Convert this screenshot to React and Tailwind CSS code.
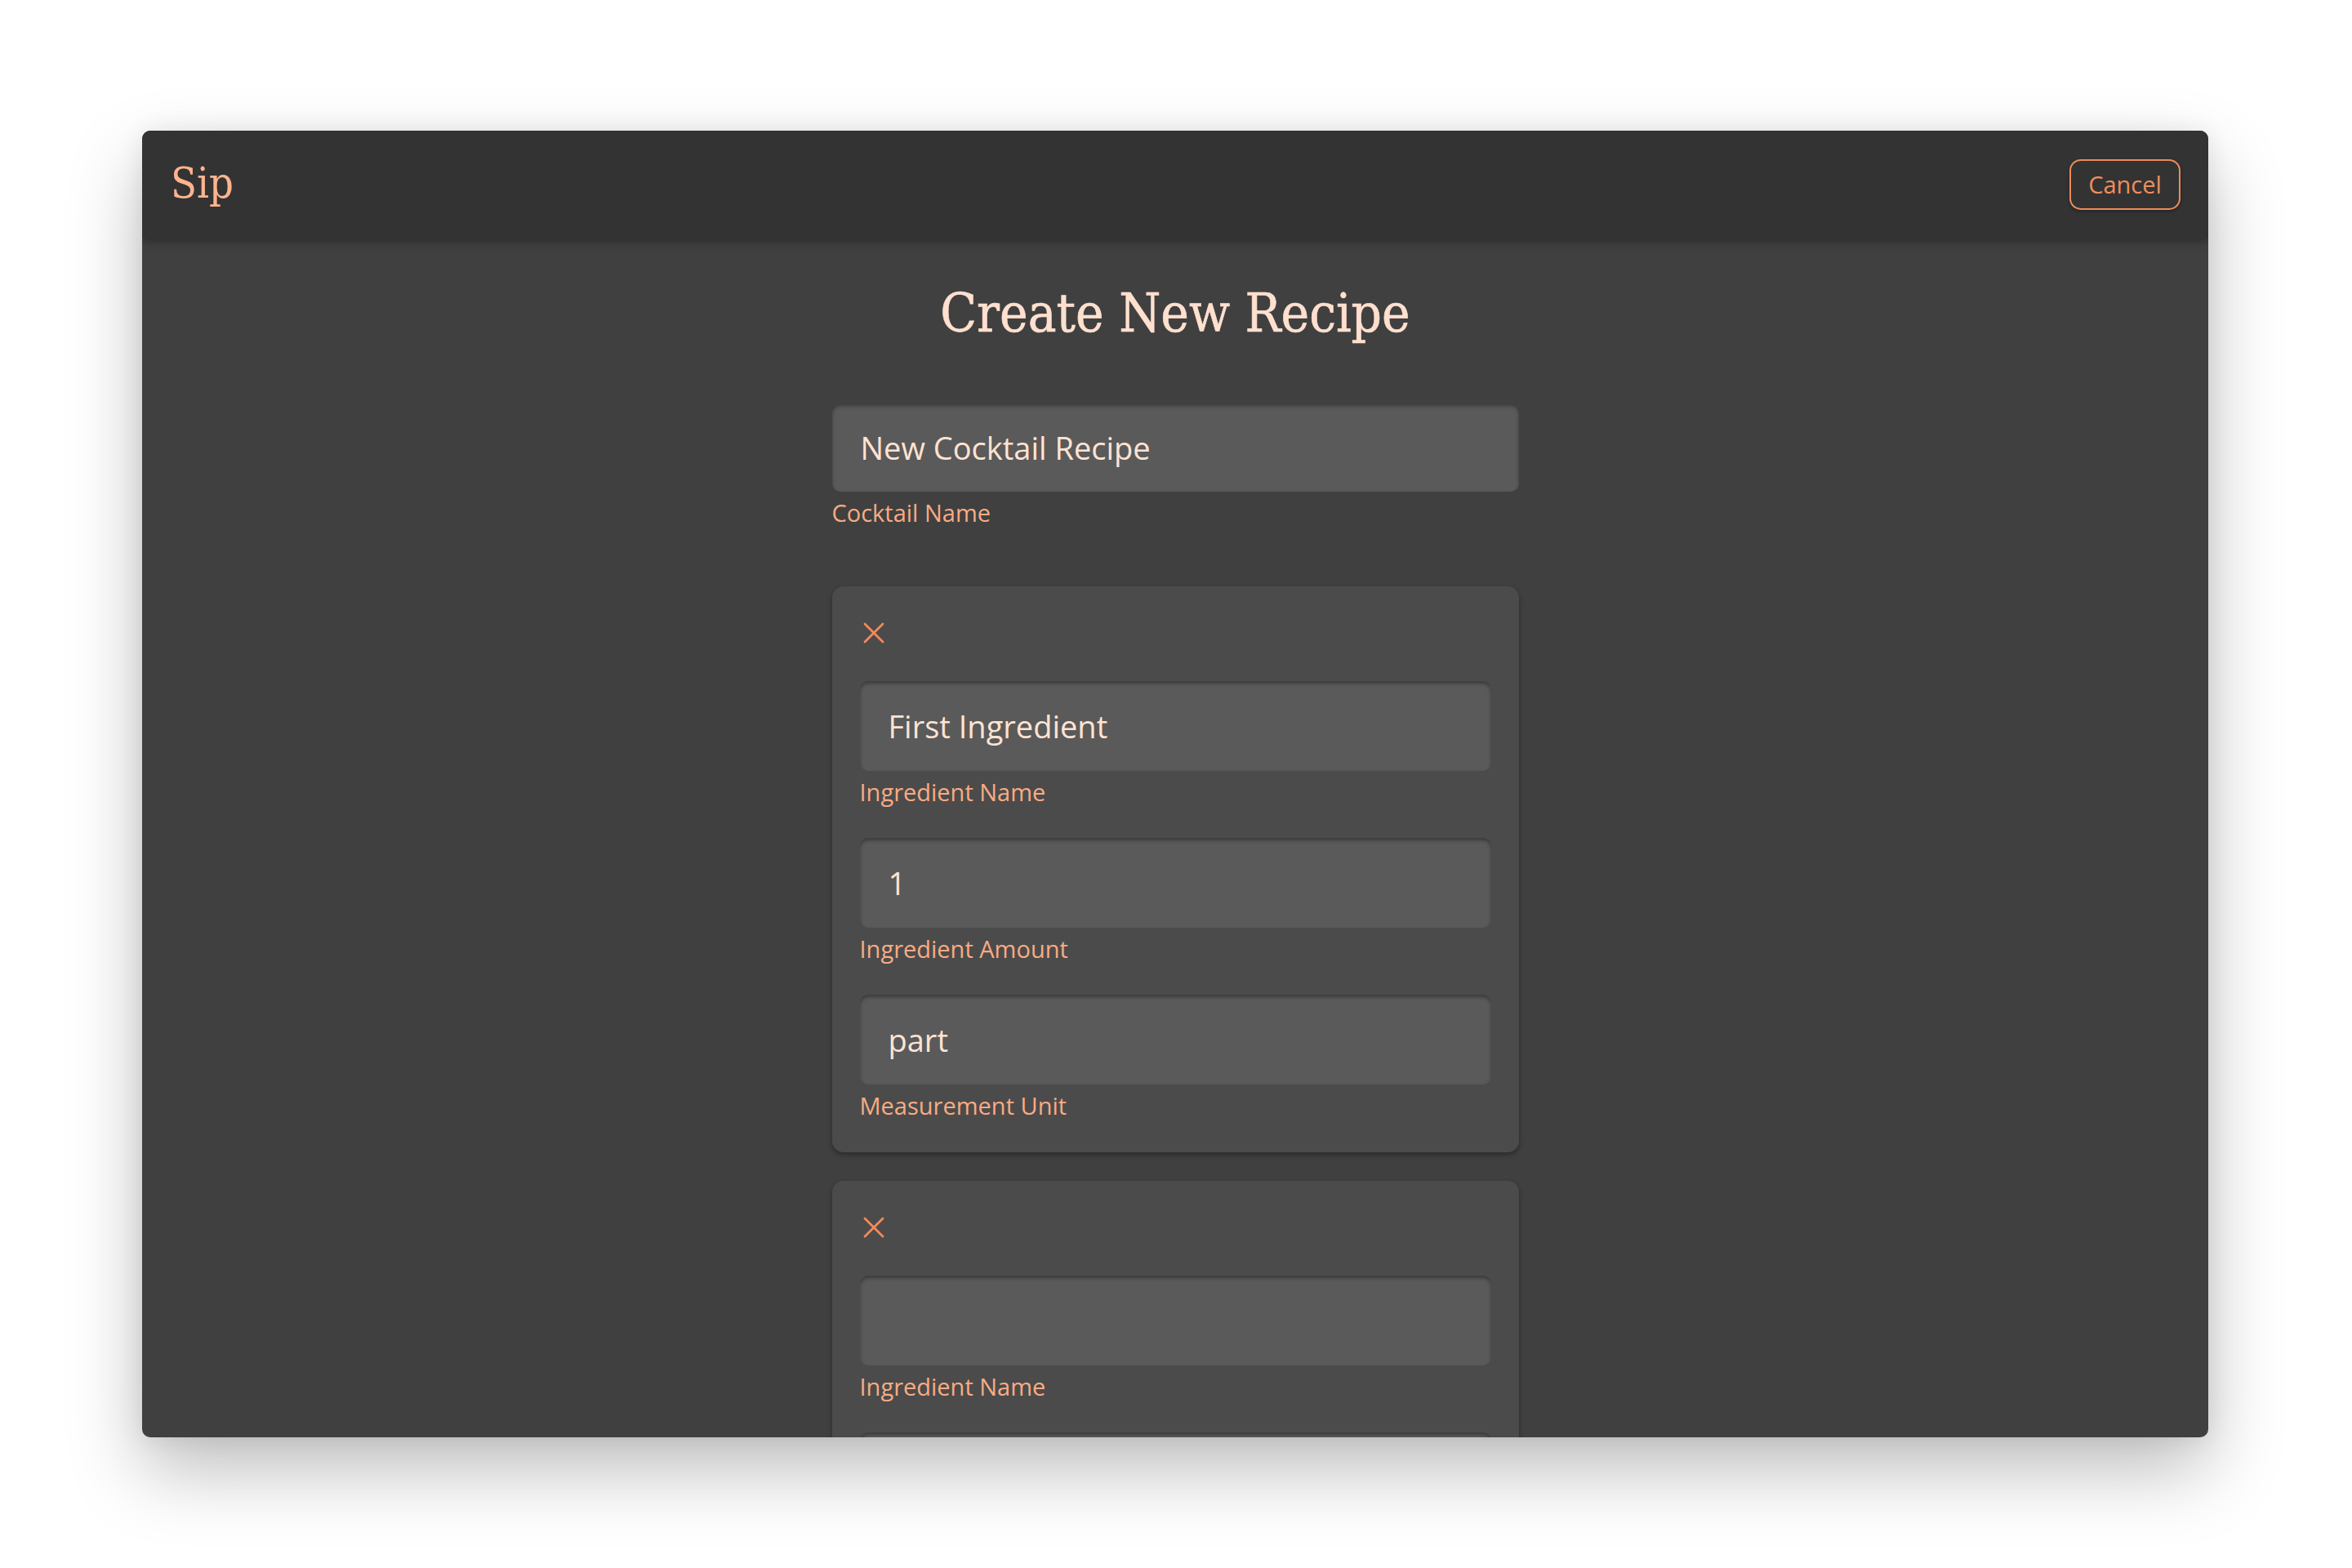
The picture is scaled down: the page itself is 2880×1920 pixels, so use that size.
import { useState } from "react";

const sans = "font-['Open_Sans','Noto_Sans',sans-serif]";
const serif = "font-['DejaVu_Serif_Condensed','Liberation_Serif',serif]";

function RemoveIcon() {
  return (
    <svg width="26" height="26" viewBox="0 0 26 26" fill="none" stroke="#f58a58" strokeWidth="2.8" strokeLinecap="round">
      <path d="M2 2 24 24" />
      <path d="M24 2 2 24" />
    </svg>
  );
}

function Field({ label, value, onChange, tall }) {
  return (
    <div className="flex flex-col">
      <input
        value={value}
        onChange={(e) => onChange(e.target.value)}
        className={`${tall ? "h-[110px]" : "h-[108px]"} w-full rounded-[10px] bg-[#5a5a5a] px-[35px] text-[38px] text-[#ffe3d3] outline-none shadow-[inset_0_3px_4px_rgba(0,0,0,0.35)] ${sans}`}
      />
      <label className={`mt-[6px] text-[29px] leading-[40px] text-[#f9ab83] ${sans}`}>{label}</label>
    </div>
  );
}

function IngredientCard({ ingredient, onChange }) {
  return (
    <div className="flex flex-col rounded-[14px] bg-[#4b4b4b] px-[34px] pt-[44px] pb-[37px] shadow-[0_3px_6px_rgba(0,0,0,0.35)]">
      <button type="button" aria-label="Remove ingredient" className="ml-[4px] h-[26px] w-[26px]">
        <RemoveIcon />
      </button>
      <div className="mt-[46px] flex flex-col gap-[36px]">
        <Field tall label="Ingredient Name" value={ingredient.name} onChange={(v) => onChange({ ...ingredient, name: v })} />
        <Field tall label="Ingredient Amount" value={ingredient.amount} onChange={(v) => onChange({ ...ingredient, amount: v })} />
        <Field tall label="Measurement Unit" value={ingredient.unit} onChange={(v) => onChange({ ...ingredient, unit: v })} />
      </div>
    </div>
  );
}

export default function App() {
  const [name, setName] = useState("New Cocktail Recipe");
  const [ingredients, setIngredients] = useState([
    { name: "First Ingredient", amount: "1", unit: "part" },
    { name: "", amount: "", unit: "" },
  ]);

  const update = (i, next) => setIngredients((list) => list.map((item, j) => (j === i ? next : item)));

  return (
    <div className="min-h-screen w-full bg-white pt-[160px] pl-[174px]">
      <div className="flex h-[1600px] w-[2530px] flex-col overflow-hidden rounded-[10px] bg-[#404040] shadow-[0_40px_90px_rgba(0,0,0,0.26),0_0_30px_rgba(0,0,0,0.08)]">
        <header className="relative z-10 flex h-[132px] shrink-0 items-center justify-between bg-[#333333] pl-[35px] pr-[34px] shadow-[0_4px_10px_rgba(0,0,0,0.3)]">
          <span className={`mt-[-4px] text-[52px] leading-none text-[#ffb48f] ${serif}`}>Sip</span>
          <button
            type="button"
            className={`h-[62px] w-[136px] rounded-[14px] border-2 border-[#ec8b5b] text-[29px] text-[#f08d5d] shadow-[0_2px_4px_rgba(0,0,0,0.3)] ${sans}`}
          >
            Cancel
          </button>
        </header>

        <main className="flex flex-1 flex-col items-center overflow-hidden">
          <h1 className={`mt-[59px] text-[65px] leading-none text-[#ffe0cf] [-webkit-text-stroke:0.6px_#ffe0cf] ${serif}`}>Create New Recipe</h1>

          <div className="mt-[78px] flex w-[841px] flex-col">
            <Field label="Cocktail Name" value={name} onChange={setName} />

            <div className="mt-[70px] flex flex-col gap-[35px]">
              {ingredients.map((ing, i) => (
                <IngredientCard key={i} ingredient={ing} onChange={(next) => update(i, next)} />
              ))}
            </div>
          </div>
        </main>
      </div>
    </div>
  );
}
